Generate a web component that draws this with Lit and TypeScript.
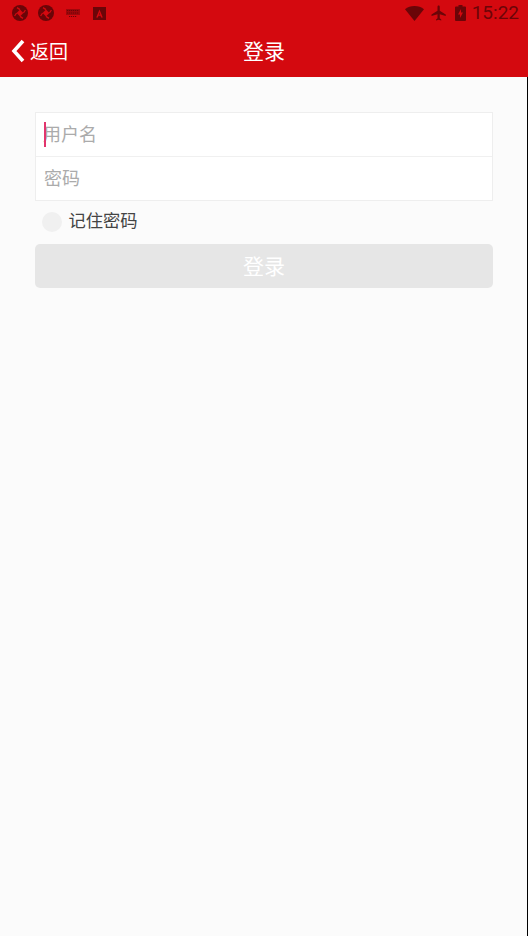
import { LitElement, html, css } from "lit";
import { customElement } from "lit/decorators.js";

@customElement("app-root")
export class AppRoot extends LitElement {
  static styles = css`
    :host { display: block; width: 528px; height: 936px; background: #fbfbfb; font-family: "Roboto", "Noto Sans CJK SC", sans-serif; overflow: hidden; }
    .page { display: flex; flex-direction: column; height: 936px; }
    .head { background: #d4090f; height: 77px; flex: none; display: flex; flex-direction: column; }
    .status { height: 26px; display: flex; align-items: center; padding: 0 9px 0 12px; color: #6b0508; }
    .status svg { display: block; flex: none; }
    .s1 { margin-right: 10px; }
    .s2 { margin: 0 12px 0 1px; }
    .spacer { flex: 1; }
    .wifi { margin-right: 6px; }
    .plane { margin-right: 7px; }
    .time { font-size: 19px; line-height: 26px; margin-left: 6px; }
    .nav { flex: 1; position: relative; display: flex; align-items: center; justify-content: center; color: #fff; padding-bottom: 4px; }
    .back { position: absolute; left: 11px; top: 0; bottom: 2px; display: flex; align-items: center; gap: 5px; font-size: 19px; }
    .title { font-size: 21px; }
    .body { flex: 1; box-shadow: inset -1px 0 0 #000; }
    .form { padding: 35px 35px 0; display: flex; flex-direction: column; }
    .fields { background: #fff; border: 1px solid #eeeeee; display: flex; flex-direction: column; }
    .field { height: 43px; box-sizing: border-box; display: flex; align-items: center; padding: 0 0 4px 8px; font-size: 18px; color: #ababab; position: relative; }
    .field:first-child { padding-left: 7px; }
    .field + .field { height: 44px; border-top: 1px solid #f0f0f0; }
    .caret { position: absolute; left: 8px; top: 9px; width: 2px; height: 25px; background: #e2356e; }
    .remember { height: 43px; box-sizing: border-box; display: flex; align-items: center; padding-left: 7px; gap: 6.5px; font-size: 17.3px; color: #444; }
    .remember span:last-child { padding-bottom: 7px; }
    .radio { width: 20px; height: 20px; border-radius: 50%; background: #f0f0f0; margin-bottom: 2px; }
    .btn { height: 44px; box-sizing: border-box; padding-bottom: 2px; background: #e6e6e6; border-radius: 5px; color: #fff; font-size: 21px; display: flex; align-items: center; justify-content: center; }
  `;

  render() {
    const ring = html`<svg class="s1" width="16" height="16" viewBox="0 0 16 16"><circle cx="8" cy="8" r="8" fill="currentColor"/><path d="M8 4.600L11.400 8 8 11.400 4.600 8z" fill="#d4090f"/><path d="M8 4.600L5 2.600M11.400 8l2-3M8 11.400l3 2M4.600 8l-2 3" stroke="#d4090f" stroke-width="1.300" fill="none"/></svg>`;
    return html`<div class="page">
      <div class="head">
        <div class="status">
          ${ring}${ring}
          <svg class="s2" width="16" height="10" viewBox="0 0 16 10"><path d="M1 1h14v6H1z" fill="#a0070b"/><path d="M2 2.500h12M2 5h12M4 8.500h8" stroke="#6b0508" stroke-width="1" stroke-dasharray="1.200 .8" fill="none"/></svg>
          <svg width="13" height="13" viewBox="0 0 13 13"><path d="M0 0h13v13H0zM6.500 2.500L3.200 10.500h1.700l.6-1.700h2l.6 1.700h1.700zM6.500 5.400l.6 2H5.900z" fill="currentColor" fill-rule="evenodd"/></svg>
          <span class="spacer"></span>
          <svg class="wifi" width="19" height="15" viewBox="0 0 19 15"><path d="M0 3.200C2.600 1.100 5.900 0 9.500 0s6.900 1.100 9.500 3.200L9.500 15z" fill="currentColor"/></svg>
          <svg class="plane" width="18" height="18" viewBox="0 0 24 24"><path d="M21 16v-2l-8-5V3.500C13 2.700 12.300 2 11.500 2S10 2.700 10 3.500V9l-8 5v2l8-2.500V19l-2 1.500V22l3.500-1 3.500 1v-1.500L13 19v-5.500z" fill="currentColor"/></svg>
          <svg width="11" height="16" viewBox="0 0 11 16"><path d="M3.500 0h4v1.500H10a1 1 0 011 1V15a1 1 0 01-1 1H1a1 1 0 01-1-1V2.500a1 1 0 011-1h2.500zM6 4L3 9.500h2V13l3-5.500H6z" fill="currentColor" fill-rule="evenodd"/></svg>
          <span class="time">15:22</span>
        </div>
        <div class="nav">
          <div class="back">
            <svg width="14" height="24" viewBox="0 0 14 24"><path d="M12 2L3 12l9 10" fill="none" stroke="#fff" stroke-width="3.600"/></svg>
            <span>返回</span>
          </div>
          <span class="title">登录</span>
        </div>
      </div>
      <div class="body">
        <div class="form">
          <div class="fields">
            <div class="field"><span class="caret"></span>用户名</div>
            <div class="field">密码</div>
          </div>
          <div class="remember"><span class="radio"></span><span>记住密码</span></div>
          <div class="btn">登录</div>
        </div>
      </div>
    </div>`;
  }
}
